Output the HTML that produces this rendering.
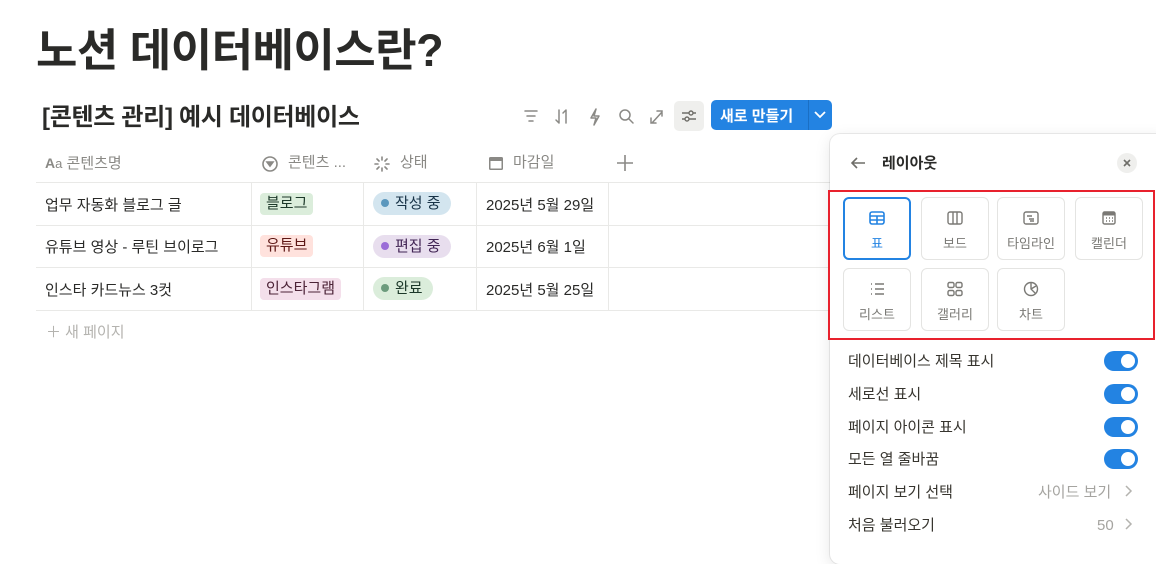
<!DOCTYPE html>
<html><head><meta charset="utf-8"><style>
*{margin:0;padding:0;box-sizing:border-box}
body{width:1156px;height:548px;overflow:hidden;background:#fff;font-family:"Liberation Sans","Noto Sans CJK KR",sans-serif;color:#37352f;position:relative}
.a{position:absolute;white-space:nowrap}
h1{position:absolute;left:36px;top:19px;font-size:45px;font-weight:700;color:#2a2a28;letter-spacing:-0.5px;line-height:64px}
.dbt{left:42px;top:102px;font-size:24px;font-weight:700;color:#2a2a28;line-height:32px;letter-spacing:-0.3px}
.hd{top:152px;font-size:15px;color:#8a8985;line-height:22px}
.hl{position:absolute;left:36px;width:794px;height:1px;background:#e9e9e7}
.vl{position:absolute;top:183px;height:127px;width:1px;background:#e9e9e7}
.c{font-size:15px;color:#2a2a28;line-height:22px}
.tag{position:absolute;height:22px;line-height:22px;padding:0 6px;border-radius:4px;font-size:15px}
.st{position:absolute;height:23px;line-height:23px;padding:0 10px 0 8px;border-radius:12px;font-size:15px}
.st i{display:inline-block;width:8px;height:8px;border-radius:50%;margin-right:6px;vertical-align:1px}
.panel{position:absolute;left:830px;top:134px;width:340px;height:430px;background:#fff;border-radius:10px;box-shadow:0 0 0 1px rgba(0,0,0,.07),0 4px 16px rgba(0,0,0,.10)}
.red{position:absolute;left:828px;top:190px;width:327px;height:150px;border:2px solid #e8212d}
.card{position:absolute;width:68px;height:63px;border:1px solid #e4e4e2;border-radius:6px;text-align:center;font-size:13px;color:#7a7975;line-height:18px}
.card svg{display:block;margin:12px auto 9px}
.sel{border:2px solid #2383e2;color:#2383e2}
.sel svg{margin-top:11px}
.row{position:absolute;left:848px;font-size:15px;color:#37352f;line-height:22px}
.tg{position:absolute;left:1104px;width:34px;height:20px;border-radius:10px;background:#2383e2}
.tg:after{content:"";position:absolute;right:3px;top:3px;width:14px;height:14px;border-radius:50%;background:#fff}
.rv{position:absolute;font-size:15px;color:#a5a4a0;line-height:22px}
</style></head><body>
<h1>노션 데이터베이스란?</h1>
<div class="a dbt">[콘텐츠 관리] 예시 데이터베이스</div>
<svg class="a" style="left:522px;top:107px" width="190" height="20" fill="none" stroke="#8a8985" stroke-width="1.5" stroke-linecap="round">
<path d="M3 4h12M5 9h8M7 14h4"/>
<path d="M37 3v13M34 13l3 3M44 16V3M41 6l3-3"/>
<path d="M74 2l-5 9h5l-2 7 5-9h-5z" stroke-linejoin="round"/>
<circle cx="103" cy="8" r="5"/><path d="M107 12l4 4"/>
<path d="M130 16l10-11M135 4h5v5M129 11v5h5"/>
</svg>
<div class="a" style="left:674px;top:101px;width:30px;height:30px;background:#efefed;border-radius:5px"></div>
<svg class="a" style="left:680px;top:107px" width="18" height="18" fill="none" stroke="#6f6e69" stroke-width="1.4"><path d="M2 6h14M2 12h14"/><circle cx="11" cy="6" r="2" fill="#efefed"/><circle cx="7" cy="12" r="2" fill="#efefed"/></svg>
<div class="a" style="left:711px;top:100px;width:121px;height:30px;background:#2383e2;border-radius:5px"></div>
<div class="a" style="left:808px;top:100px;width:1px;height:30px;background:#1a6fc4"></div>
<div class="a" style="left:720px;top:106px;font-size:15px;font-weight:700;color:#fff;line-height:22px">새로 만들기</div>
<svg class="a" style="left:812px;top:109px" width="16" height="12" fill="none" stroke="#fff" stroke-width="1.8"><path d="M3 3l5 5 5-5"/></svg>
<div class="a hd" style="left:45px"><b style="font-size:14px;color:#8a8985">A</b><span style="font-size:13px">a</span> 콘텐츠명</div>
<svg class="a" style="left:261px;top:155px" width="18" height="18" fill="none" stroke="#8a8985" stroke-width="1.6"><circle cx="9" cy="9" r="7"/><path d="M6 7h6l-3 4z" fill="#8a8985"/></svg>
<div class="a hd" style="left:288px">콘텐츠 ...</div>
<svg class="a" style="left:373px;top:155px" width="18" height="18" stroke="#8a8985" stroke-width="1.6" stroke-linecap="round"><path d="M9 2v3M9 13v3M2 9h3M13 9h3M4 4l2 2M12 12l2 2M4 14l2-2M12 6l2-2"/></svg>
<div class="a hd" style="left:400px">상태</div>
<svg class="a" style="left:487px;top:154px" width="18" height="18"><rect x="2" y="3" width="14" height="13" rx="1.5" fill="#8a8985"/><rect x="3.5" y="7" width="11" height="7.5" fill="#fff"/></svg>
<div class="a hd" style="left:513px">마감일</div>
<svg class="a" style="left:616px;top:154px" width="18" height="18" stroke="#8a8985" stroke-width="1.6"><path d="M9 1v16M1 9h16"/></svg>
<div class="hl" style="top:182px"></div>
<div class="hl" style="top:225px"></div>
<div class="hl" style="top:267px"></div>
<div class="hl" style="top:310px"></div>
<div class="vl" style="left:251px"></div><div class="vl" style="left:363px"></div><div class="vl" style="left:476px"></div><div class="vl" style="left:608px"></div>
<div class="a c" style="left:45px;top:195px">업무 자동화 블로그 글</div>
<div class="a c" style="left:45px;top:237px">유튜브 영상 - 루틴 브이로그</div>
<div class="a c" style="left:45px;top:280px">인스타 카드뉴스 3컷</div>
<div class="tag" style="left:260px;top:193px;background:#dbeddb;color:#1c3829">블로그</div>
<div class="tag" style="left:260px;top:235px;background:#ffe2dd;color:#5d1715">유튜브</div>
<div class="tag" style="left:260px;top:278px;background:#f4dfeb;color:#4c2337">인스타그램</div>
<div class="st" style="left:373px;top:192px;background:#d3e5ef;color:#183347"><i style="background:#5b97bd"></i>작성 중</div>
<div class="st" style="left:373px;top:235px;background:#e8deee;color:#412454"><i style="background:#9a6dd7"></i>편집 중</div>
<div class="st" style="left:373px;top:277px;background:#dbeddb;color:#1c3829"><i style="background:#6c9b7d"></i>완료</div>
<div class="a c" style="left:486px;top:195px">2025년 5월 29일</div>
<div class="a c" style="left:486px;top:237px">2025년 6월 1일</div>
<div class="a c" style="left:486px;top:280px">2025년 5월 25일</div>
<div class="a" style="left:46px;top:322px;font-size:15px;color:#b4b3af;line-height:22px">＋ 새 페이지</div>
<div class="panel"></div>
<svg class="a" style="left:849px;top:154px" width="18" height="18" fill="none" stroke="#6f6e69" stroke-width="1.6"><path d="M16 9H3M8 4L3 9l5 5"/></svg>
<div class="a" style="left:882px;top:153px;font-size:15px;font-weight:700;color:#2a2a28;line-height:22px">레이아웃</div>
<div class="a" style="left:1117px;top:153px;width:20px;height:20px;border-radius:50%;background:#efefed"></div>
<svg class="a" style="left:1121px;top:157px" width="12" height="12" stroke="#6f6e69" stroke-width="1.6"><path d="M3 3l6 6M9 3l-6 6"/></svg>
<div class="red"></div>
<div class="card sel" style="left:843px;top:197px"><svg width="18" height="16" fill="none" stroke="#2383e2" stroke-width="1.6"><rect x="2" y="2" width="14" height="12" rx="2"/><path d="M2 6h14M2 10h14M9 6v8"/></svg>표</div>
<div class="card" style="left:921px;top:197px"><svg width="18" height="16" fill="none" stroke="#7a7975" stroke-width="1.4"><rect x="2" y="2" width="14" height="12" rx="2"/><path d="M7 2v12M11 2v12"/></svg>보드</div>
<div class="card" style="left:997px;top:197px"><svg width="18" height="16" fill="none" stroke="#7a7975" stroke-width="1.4"><rect x="2" y="2" width="14" height="12" rx="2"/><path d="M5 6h5M7 9h5M8 11h4"/></svg>타임라인</div>
<div class="card" style="left:1075px;top:197px"><svg width="18" height="16" fill="none" stroke="#7a7975" stroke-width="1.4"><rect x="3" y="2" width="12" height="12" rx="1.5"/><path d="M3 4h12" stroke-width="3"/><path d="M6 8h1M9 8h1M12 8h1M6 11h1M9 11h1M12 11h1"/></svg>캘린더</div>
<div class="card" style="left:843px;top:268px"><svg width="18" height="16" fill="none" stroke="#7a7975" stroke-width="1.4"><path d="M3 3h1M3 8h1M3 13h1M7 3h9M7 8h9M7 13h9"/></svg>리스트</div>
<div class="card" style="left:921px;top:268px"><svg width="18" height="16" fill="none" stroke="#7a7975" stroke-width="1.4"><rect x="2" y="1.5" width="6" height="5" rx="1.5"/><rect x="10" y="1.5" width="6" height="5" rx="1.5"/><rect x="2" y="9.5" width="6" height="5" rx="1.5"/><rect x="10" y="9.5" width="6" height="5" rx="1.5"/></svg>갤러리</div>
<div class="card" style="left:997px;top:268px"><svg width="18" height="16" fill="none" stroke="#7a7975" stroke-width="1.4"><circle cx="9" cy="8" r="6.5"/><path d="M9 1.5V8l4.5 4.5M9 8l5-3"/></svg>차트</div>
<div class="row" style="top:351px">데이터베이스 제목 표시</div><div class="tg" style="top:351px"></div>
<div class="row" style="top:384px">세로선 표시</div><div class="tg" style="top:384px"></div>
<div class="row" style="top:417px">페이지 아이콘 표시</div><div class="tg" style="top:417px"></div>
<div class="row" style="top:449px">모든 열 줄바꿈</div><div class="tg" style="top:449px"></div>
<div class="row" style="top:482px">페이지 보기 선택</div>
<div class="rv" style="left:1038px;top:482px">사이드 보기</div>
<div class="row" style="top:515px">처음 불러오기</div>
<div class="rv" style="left:1097px;top:515px">50</div>
<svg class="a" style="left:1123px;top:484px" width="10" height="14" fill="none" stroke="#b4b3af" stroke-width="1.5"><path d="M3 2l5 5-5 5"/></svg>
<svg class="a" style="left:1123px;top:517px" width="10" height="14" fill="none" stroke="#b4b3af" stroke-width="1.5"><path d="M3 2l5 5-5 5"/></svg>
</body></html>
